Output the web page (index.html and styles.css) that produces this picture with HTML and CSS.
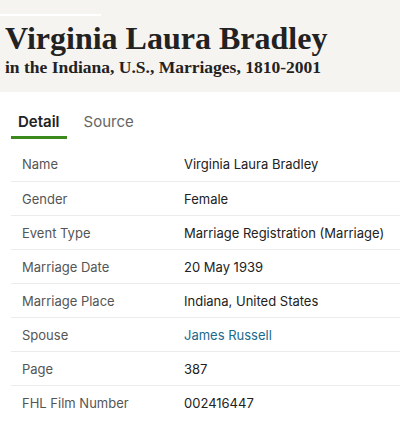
FILE: index.html
```
<!DOCTYPE html>
<html lang="en">
<head>
    <meta charset="UTF-8">
    <title>Virginia Laura Bradley</title>
    <link rel="stylesheet" href="styles.css">
</head>
<body>
    <!-- Record header -->
    <div class="record-header">
        <div class="header-rule"></div>
        <h1>Virginia Laura Bradley</h1>
        <p class="collection">in the Indiana, U.S., Marriages, 1810-2001</p>
    </div>

    <!-- Tabs -->
    <div class="tabs">
        <span class="tab active">Detail</span>
        <span class="tab">Source</span>
    </div>

    <!-- Detail rows -->
    <div class="details">
        <div class="row"><span class="label">Name</span><span class="value">Virginia Laura Bradley</span></div>
        <div class="row"><span class="label">Gender</span><span class="value">Female</span></div>
        <div class="row"><span class="label">Event Type</span><span class="value">Marriage Registration (Marriage)</span></div>
        <div class="row"><span class="label">Marriage Date</span><span class="value">20 May 1939</span></div>
        <div class="row"><span class="label">Marriage Place</span><span class="value">Indiana, United States</span></div>
        <div class="row"><span class="label">Spouse</span><span class="value"><a href="#">James Russell</a></span></div>
        <div class="row"><span class="label">Page</span><span class="value">387</span></div>
        <div class="row"><span class="label">FHL Film Number</span><span class="value">002416447</span></div>
    </div>
</body>
</html>
```
FILE: styles.css
```
* {
    margin: 0;
    padding: 0;
    box-sizing: border-box;
}

body {
    font-family: 'Inter', 'Liberation Sans', sans-serif;
    background-color: #fff;
    color: #222;
}

.record-header {
    background-color: #f6f4f1;
    height: 92px;
    padding: 14px 0 0 5px;
}

.header-rule {
    width: 101px;
    height: 2px;
    margin-left: -5px;
    background-color: #fff;
}

h1 {
    font-family: 'Liberation Serif', serif;
    font-size: 32px;
    font-weight: bold;
    line-height: 36px;
    color: #222;
    margin-top: 4px;
}

.collection {
    font-family: 'Liberation Serif', serif;
    font-size: 17.5px;
    font-weight: bold;
    line-height: 22px;
    color: #222;
}

.tabs {
    display: flex;
    gap: 10px;
    margin: 20px 0 0 11px;
}

.tab {
    font-size: 15px;
    line-height: 20px;
    padding: 0 7px 4px;
    color: #666;
    border-bottom: 3px solid transparent;
}

.tab.active {
    color: #222;
    font-weight: 600;
    border-bottom-color: #3c8a1e;
}

.details {
    margin: 8px 0 0 11px;
    font-size: 13px;
}

.row {
    display: flex;
    align-items: center;
    height: 34px;
}

.row + .row {
    border-top: 1px solid #ececec;
}

.label {
    width: 173px;
    padding-left: 11px;
    color: #555;
}

.value {
    color: #222;
}

.value a {
    color: #1b6a8c;
    text-decoration: none;
}
```
